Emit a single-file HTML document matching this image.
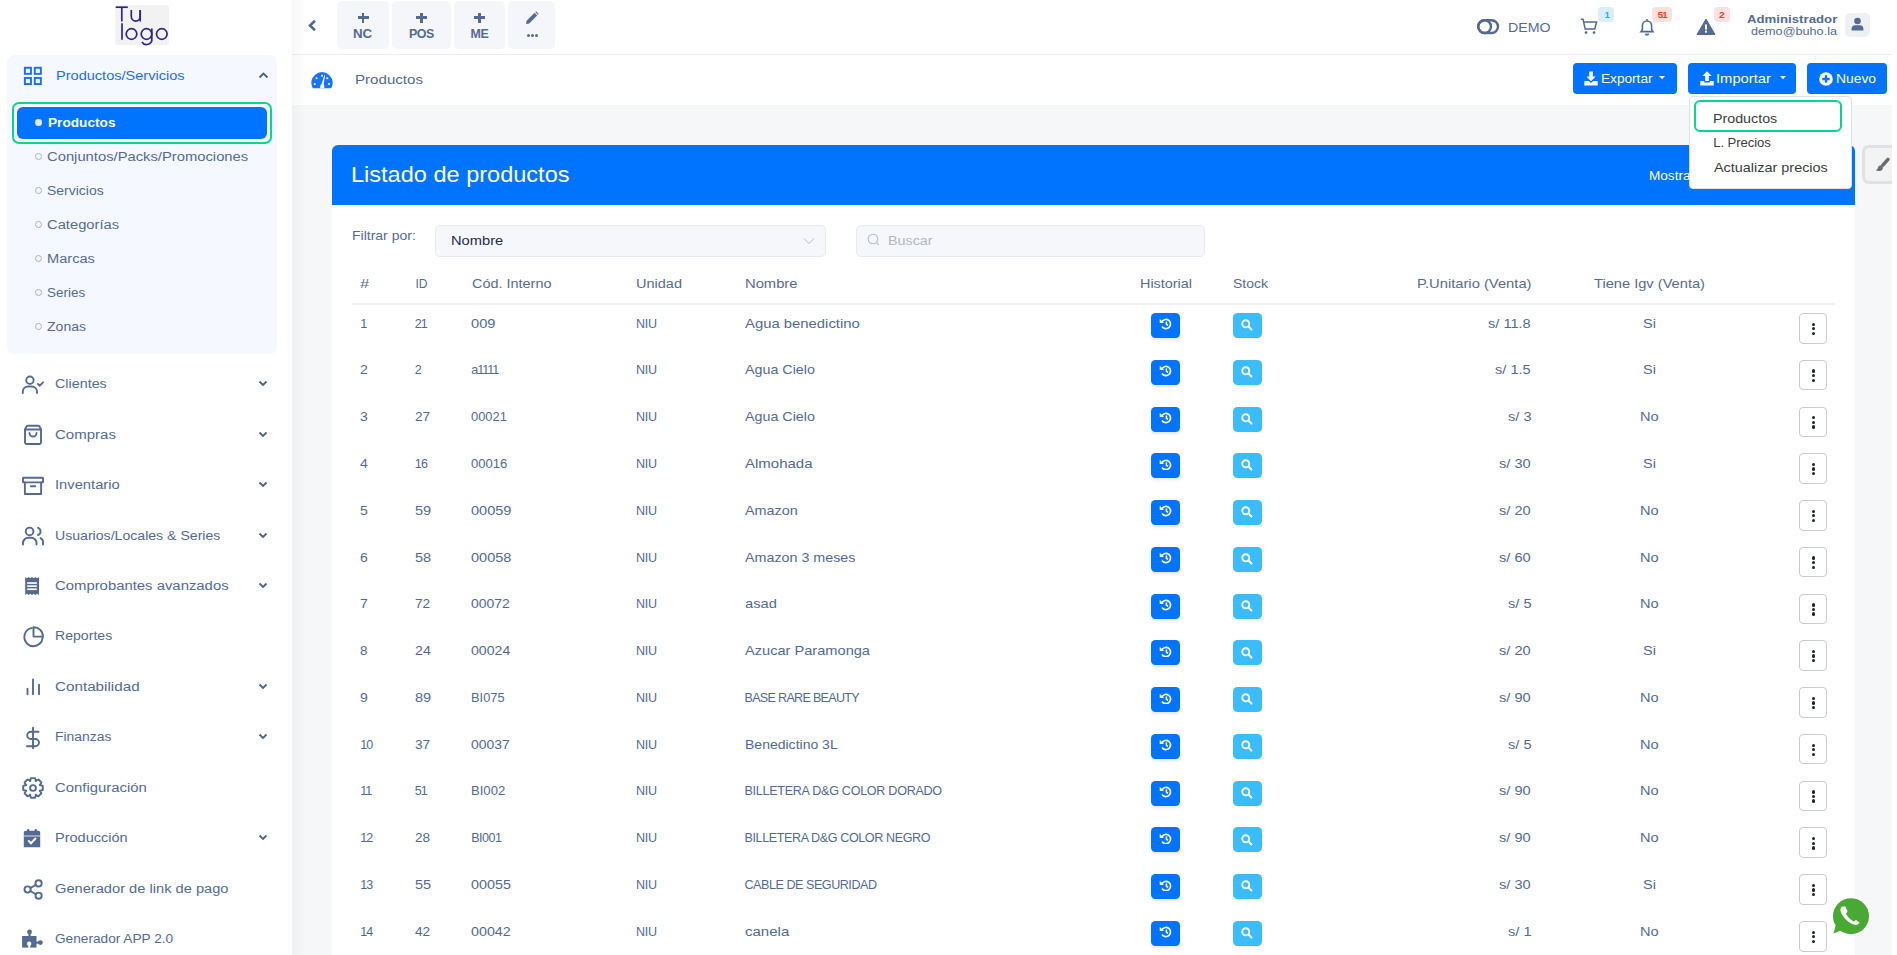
<!DOCTYPE html>
<html><head><meta charset="utf-8">
<style>
*{box-sizing:border-box;margin:0;padding:0}
html,body{width:1897px;height:955px;overflow:hidden;background:#fff;font-family:"Liberation Sans",sans-serif}
.abs{position:absolute}
.t{position:absolute;white-space:nowrap;line-height:1;transform-origin:0 0}
svg{display:block}
.hb{position:absolute;left:1151px;width:29px;height:25px;border-radius:4.5px;background:#0073ff;box-shadow:0 2px 3px rgba(90,60,220,0.14)}
.sb{position:absolute;left:1233px;width:29px;height:25px;border-radius:4.5px;background:#3bbdfd}
.hb svg,.sb svg{position:absolute;left:8px;top:6px}
.ab{position:absolute;left:1799px;width:28px;height:30.5px;border:1px solid #c9cbcf;border-radius:4px;background:#fff}
.ab i{position:absolute;left:11.6px;width:3.3px;height:3.3px;border-radius:50%;background:#1f2530}
</style></head><body>
<div class="abs" style="left:115px;top:5px;width:54px;height:40px;background:#f2f2f3;border-radius:3px"></div>
<svg class="abs" style="left:0;top:0" width="180" height="50" viewBox="0 0 180 50"><g fill="none" stroke="#2e2489" stroke-width="1.7">
<path d="M115.7 7.2 H127.8"/><path d="M121.8 7.2 V21.5"/>
<path d="M131.3 10 V16.6 A4.3 4.3 0 0 0 140.2 16.6 V10"/><path d="M140.2 10 V21.5"/>
<path d="M122 23.3 V39.8"/>
<circle cx="131.5" cy="34" r="5.3"/>
<circle cx="146.5" cy="34" r="5.3"/><path d="M151.8 28.4 V38.6 A5.3 5.3 0 0 1 142 42"/>
<circle cx="161.8" cy="34" r="5.3"/>
</g></svg>
<div class="abs" style="left:7px;top:55px;width:270px;height:299px;background:#f5f9ff;border-radius:7px"></div>
<svg class="abs" style="left:23px;top:66px" width="20" height="20" viewBox="0 0 20 20" fill="none" stroke="#1a6dff" stroke-width="1.9">
<rect x="1.85" y="1.75" width="6.1" height="6.1"/><rect x="11.75" y="1.75" width="6.1" height="6.1"/><rect x="1.85" y="11.95" width="6.1" height="6.1"/><rect x="11.75" y="11.95" width="6.1" height="6.1"/></svg>
<div class="t" style="left:55.90px;top:70.00px;font-size:12.57px;color:#1f6bff;transform:scaleX(1.1584);">Productos/Servicios</div>
<svg class="abs" style="left:257.7px;top:71.3px" width="11" height="8" viewBox="0 0 11 8"><path d="M1.5 6.5 L5.5 2.5 L9.5 6.5" fill="none" stroke="#4f6287" stroke-width="1.9"/></svg>
<div class="abs" style="left:12px;top:102px;width:260px;height:42px;border:2.5px solid #07d68f;border-radius:7px"></div>
<div class="abs" style="left:17px;top:107px;width:250px;height:32px;background:#0073ff;border-radius:6px"></div>
<div class="abs" style="left:35.3px;top:119.3px;width:6.5px;height:6.5px;background:#dce9ff;border-radius:50%"></div>
<div class="t" style="left:47.50px;top:117.00px;font-size:12.57px;color:#ffffff;font-weight:bold;transform:scaleX(1.0865);">Productos</div>
<div class="abs" style="left:34.7px;top:153.0px;width:7.3px;height:7.3px;border:1.3px solid #a9b1c0;border-radius:50%"></div>
<div class="t" style="left:47.30px;top:151.00px;font-size:12.85px;color:#556a93;transform:scaleX(1.1503);">Conjuntos/Packs/Promociones</div>
<div class="abs" style="left:34.7px;top:187.0px;width:7.3px;height:7.3px;border:1.3px solid #a9b1c0;border-radius:50%"></div>
<div class="t" style="left:47.30px;top:185.00px;font-size:12.85px;color:#556a93;transform:scaleX(1.0881);">Servicios</div>
<div class="abs" style="left:34.7px;top:221.0px;width:7.3px;height:7.3px;border:1.3px solid #a9b1c0;border-radius:50%"></div>
<div class="t" style="left:47.30px;top:219.00px;font-size:12.85px;color:#556a93;transform:scaleX(1.1476);">Categorías</div>
<div class="abs" style="left:34.7px;top:255.0px;width:7.3px;height:7.3px;border:1.3px solid #a9b1c0;border-radius:50%"></div>
<div class="t" style="left:47.30px;top:253.00px;font-size:12.85px;color:#556a93;transform:scaleX(1.1375);">Marcas</div>
<div class="abs" style="left:34.7px;top:289.0px;width:7.3px;height:7.3px;border:1.3px solid #a9b1c0;border-radius:50%"></div>
<div class="t" style="left:47.30px;top:287.00px;font-size:12.85px;color:#556a93;transform:scaleX(1.0493);">Series</div>
<div class="abs" style="left:34.7px;top:323.0px;width:7.3px;height:7.3px;border:1.3px solid #a9b1c0;border-radius:50%"></div>
<div class="t" style="left:47.30px;top:321.00px;font-size:12.85px;color:#556a93;transform:scaleX(1.0951);">Zonas</div>
<div class="t" style="left:55.40px;top:378.00px;font-size:12.71px;color:#556a93;transform:scaleX(1.1284);">Clientes</div>
<svg class="abs" style="left:258.1px;top:379.8px" width="10" height="7" viewBox="0 0 10 7"><path d="M1.5 1.5 L5 5 L8.5 1.5" fill="none" stroke="#4f6287" stroke-width="1.85"/></svg>
<div class="t" style="left:55.40px;top:429.00px;font-size:12.71px;color:#556a93;transform:scaleX(1.1814);">Compras</div>
<svg class="abs" style="left:258.1px;top:430.8px" width="10" height="7" viewBox="0 0 10 7"><path d="M1.5 1.5 L5 5 L8.5 1.5" fill="none" stroke="#4f6287" stroke-width="1.85"/></svg>
<div class="t" style="left:55.40px;top:479.00px;font-size:12.71px;color:#556a93;transform:scaleX(1.1596);">Inventario</div>
<svg class="abs" style="left:258.1px;top:480.8px" width="10" height="7" viewBox="0 0 10 7"><path d="M1.5 1.5 L5 5 L8.5 1.5" fill="none" stroke="#4f6287" stroke-width="1.85"/></svg>
<div class="t" style="left:55.40px;top:530.00px;font-size:12.71px;color:#556a93;transform:scaleX(1.1102);">Usuarios/Locales &amp; Series</div>
<svg class="abs" style="left:258.1px;top:531.8px" width="10" height="7" viewBox="0 0 10 7"><path d="M1.5 1.5 L5 5 L8.5 1.5" fill="none" stroke="#4f6287" stroke-width="1.85"/></svg>
<div class="t" style="left:55.40px;top:580.00px;font-size:12.71px;color:#556a93;transform:scaleX(1.1706);">Comprobantes avanzados</div>
<svg class="abs" style="left:258.1px;top:581.8px" width="10" height="7" viewBox="0 0 10 7"><path d="M1.5 1.5 L5 5 L8.5 1.5" fill="none" stroke="#4f6287" stroke-width="1.85"/></svg>
<div class="t" style="left:55.40px;top:630.00px;font-size:12.71px;color:#556a93;transform:scaleX(1.1097);">Reportes</div>
<div class="t" style="left:55.40px;top:681.00px;font-size:12.71px;color:#556a93;transform:scaleX(1.1979);">Contabilidad</div>
<svg class="abs" style="left:258.1px;top:682.8px" width="10" height="7" viewBox="0 0 10 7"><path d="M1.5 1.5 L5 5 L8.5 1.5" fill="none" stroke="#4f6287" stroke-width="1.85"/></svg>
<div class="t" style="left:55.40px;top:731.00px;font-size:12.71px;color:#556a93;transform:scaleX(1.0941);">Finanzas</div>
<svg class="abs" style="left:258.1px;top:732.8px" width="10" height="7" viewBox="0 0 10 7"><path d="M1.5 1.5 L5 5 L8.5 1.5" fill="none" stroke="#4f6287" stroke-width="1.85"/></svg>
<div class="t" style="left:55.40px;top:782.00px;font-size:12.71px;color:#556a93;transform:scaleX(1.1723);">Configuración</div>
<div class="t" style="left:55.40px;top:832.00px;font-size:12.71px;color:#556a93;transform:scaleX(1.1438);">Producción</div>
<svg class="abs" style="left:258.1px;top:833.8px" width="10" height="7" viewBox="0 0 10 7"><path d="M1.5 1.5 L5 5 L8.5 1.5" fill="none" stroke="#4f6287" stroke-width="1.85"/></svg>
<div class="t" style="left:55.40px;top:883.00px;font-size:12.71px;color:#556a93;transform:scaleX(1.1533);">Generador de link de pago</div>
<div class="t" style="left:55.40px;top:933.00px;font-size:12.71px;color:#556a93;transform:scaleX(1.0752);">Generador APP 2.0</div>
<svg class="abs" style="left:0;top:0" width="60" height="955" viewBox="0 0 60 955">
<g fill="none" stroke="#556a93" stroke-width="1.9" stroke-linecap="round" stroke-linejoin="round">
<circle cx="29.9" cy="380.2" r="3.7"/>
<path d="M22.8 393 V391.5 A5.2 5.2 0 0 1 28 386.5 H31.8 A5.2 5.2 0 0 1 37 391.5 V393"/>
<path d="M38 384 L39.8 385.7 L43 382.3"/>
<path d="M25 429.5 V442.2 A1.8 1.8 0 0 0 26.8 444 H39.2 A1.8 1.8 0 0 0 41 442.2 V429.5 L39.6 426.6 A1.8 1.8 0 0 0 38 425.7 H28 A1.8 1.8 0 0 0 26.4 426.6 Z"/>
<path d="M25 429.5 H41"/>
<path d="M29.5 433 A3.5 3.5 0 0 0 36.5 433"/>
<rect x="23" y="477.8" width="20" height="4.6" rx="0.5"/>
<path d="M24.9 482.4 V494 H41.1 V482.4"/>
<path d="M30.8 486.2 H35.2"/>
<circle cx="29.6" cy="531.4" r="3.8"/>
<path d="M23 544.5 V543 A5.3 5.3 0 0 1 28.3 537.7 H31.2 A5.3 5.3 0 0 1 36.5 543 V544.5"/>
<path d="M38 527.8 A3.8 3.8 0 0 1 38 535"/>
<path d="M40.5 538.2 A4.4 4.4 0 0 1 43 542.2 V544.5"/>
<path d="M42.6 637.8 A9.2 9.2 0 1 1 32 627.9"/>
<path d="M42.9 636.6 A9 9 0 0 0 33.5 627.3 V636.6 Z"/>
<path d="M27.5 688.8 V694.2"/><path d="M33 679.5 V694.2"/><path d="M39 684.8 V694.2"/>
<path d="M33 727.8 V748.2"/>
<path d="M38.6 731.8 H30.8 A3.6 3.6 0 0 0 30.8 739 H35.4 A3.6 3.6 0 0 1 35.4 746.2 H27"/>
<circle cx="33" cy="788" r="2.9"/>
<path d="M29.99 781.14 L30.92 778.12 L35.08 778.12 L36.01 781.14 L35.65 780.99 L38.45 779.51 L41.39 782.45 L39.91 785.25 L39.76 784.89 L42.78 785.82 L42.78 789.98 L39.76 790.91 L39.91 790.55 L41.39 793.35 L38.45 796.29 L35.65 794.81 L36.01 794.66 L35.08 797.68 L30.92 797.68 L29.99 794.66 L30.35 794.81 L27.55 796.29 L24.61 793.35 L26.09 790.55 L26.24 790.91 L23.22 789.98 L23.22 785.82 L26.24 784.89 L26.09 785.25 L24.61 782.45 L27.55 779.51 L30.35 780.99 Z"/>
<circle cx="27.6" cy="889.5" r="3.1"/><circle cx="38.6" cy="883.4" r="3.1"/><circle cx="38.6" cy="895.7" r="3.1"/>
<path d="M30.4 888 L35.8 884.9"/><path d="M30.4 891 L35.8 894.2"/>
</g>
<g fill="#556a93">
<path d="M25.2 577 L26.9 578.3 L28.6 577 L30.3 578.3 L32 577 L33.7 578.3 L35.4 577 L37.1 578.3 L39 577 V595 L37.1 593.7 L35.4 595 L33.7 593.7 L32 595 L30.3 593.7 L28.6 595 L26.9 593.7 L25.2 595 Z"/>
<path d="M23.8 832.5 A1.8 1.8 0 0 1 25.6 830.7 H38.4 A1.8 1.8 0 0 1 40.2 832.5 V847.3 H23.8 Z"/>
<rect x="27" y="829" width="2.4" height="4" rx="1"/><rect x="34.6" y="829" width="2.4" height="4" rx="1"/>
<rect x="22.1" y="936" width="14.4" height="11.6"/>
<circle cx="29.5" cy="931.9" r="2.4"/><rect x="28.4" y="932.5" width="2.2" height="4"/>
<circle cx="40.4" cy="942.6" r="2.4"/><rect x="36" y="941.6" width="3" height="2.1"/>
</g>
<g fill="#fff" stroke="none">
<rect x="27.2" y="582.2" width="9.6" height="1.7"/><rect x="27.2" y="585.3" width="9.6" height="1.7"/><rect x="27.2" y="588.4" width="9.6" height="1.7"/>
<rect x="23.8" y="835.6" width="16.4" height="0.8"/>
<circle cx="29.2" cy="943.7" r="2.2"/><rect x="28.3" y="944" width="1.8" height="4"/>
</g>
<path d="M28.2 840.4 L31 843.2 L36 838" fill="none" stroke="#fff" stroke-width="2"/>
</svg>
<div class="abs" style="left:292px;top:54px;width:1600px;height:1px;background:#eceef3"></div>
<svg class="abs" style="left:307px;top:19px" width="11" height="13" viewBox="0 0 11 13"><path d="M8 1.8 L3 6.5 L8 11.2" fill="none" stroke="#556a93" stroke-width="2.6"/></svg>
<div class="abs" style="left:337px;top:1px;width:52px;height:48px;background:#f4f6f9;border-radius:5px"></div>
<div class="abs" style="left:357.5px;top:16.2px;width:11px;height:2.6px;background:#556a93"></div>
<div class="abs" style="left:361.7px;top:12.5px;width:2.6px;height:10.3px;background:#556a93"></div>
<div class="abs" style="left:392px;top:1px;width:59px;height:48px;background:#f4f6f9;border-radius:5px"></div>
<div class="abs" style="left:416.0px;top:16.2px;width:11px;height:2.6px;background:#556a93"></div>
<div class="abs" style="left:420.2px;top:12.5px;width:2.6px;height:10.3px;background:#556a93"></div>
<div class="abs" style="left:454px;top:1px;width:51px;height:48px;background:#f4f6f9;border-radius:5px"></div>
<div class="abs" style="left:474.0px;top:16.2px;width:11px;height:2.6px;background:#556a93"></div>
<div class="abs" style="left:478.2px;top:12.5px;width:2.6px;height:10.3px;background:#556a93"></div>
<div class="abs" style="left:508px;top:1px;width:47px;height:48px;background:#f4f6f9;border-radius:5px"></div>
<div class="t" style="left:353.40px;top:28.00px;font-size:12.43px;color:#556a93;font-weight:bold;transform:scaleX(1.0695);">NC</div>
<div class="t" style="left:409.00px;top:28.00px;font-size:12.43px;color:#556a93;font-weight:bold;letter-spacing:-0.467px;">POS</div>
<div class="t" style="left:470.60px;top:28.00px;font-size:12.43px;color:#556a93;font-weight:bold;letter-spacing:-0.441px;">ME</div>
<svg class="abs" style="left:525px;top:11px" width="14" height="14" viewBox="0 0 14 14"><path d="M1 13 L1.6 9.8 L9.6 1.8 L12.2 4.4 L4.2 12.4 Z" fill="#556a93"/><path d="M10.3 1.1 L11.1 0.3 L13.7 2.9 L12.9 3.7 Z" fill="#556a93"/></svg>
<div class="abs" style="left:526.6px;top:33.7px;width:3.2px;height:3.2px;background:#556a93;border-radius:50%"></div>
<div class="abs" style="left:530.9px;top:33.7px;width:3.2px;height:3.2px;background:#556a93;border-radius:50%"></div>
<div class="abs" style="left:535.2px;top:33.7px;width:3.2px;height:3.2px;background:#556a93;border-radius:50%"></div>
<svg class="abs" style="left:1476px;top:18px" width="24" height="17" viewBox="0 0 24 17"><rect x="2.2" y="2.2" width="19.8" height="12.8" rx="6.4" fill="none" stroke="#556a93" stroke-width="2.4"/><circle cx="8.6" cy="8.6" r="6.4" fill="none" stroke="#556a93" stroke-width="2.4"/></svg>
<div class="t" style="left:1507.70px;top:21.00px;font-size:13.69px;color:#556a93;transform:scaleX(1.0350);">DEMO</div>
<svg class="abs" style="left:1580px;top:18px" width="18" height="17" viewBox="0 0 18 17" fill="none" stroke="#556a93" stroke-width="1.5"><path d="M0.8 1.2 H3 L5.2 11 H14.8 L16.6 4 H4"/><circle cx="6" cy="14.6" r="1.3" fill="#556a93" stroke="none"/><circle cx="14" cy="14.6" r="1.3" fill="#556a93" stroke="none"/></svg>
<div class="abs" style="left:1598px;top:7px;width:16px;height:15px;background:#d9effd;border-radius:4px"></div>
<div class="t" style="left:1604.60px;top:10.00px;font-size:9.64px;color:#3aa3f5;font-weight:bold;">1</div>
<svg class="abs" style="left:1639px;top:18px" width="16" height="18" viewBox="0 0 16 18" fill="none" stroke="#556a93" stroke-width="1.6"><path d="M2 13.6 H14 L12.6 11.6 V7.6 A4.6 4.6 0 0 0 3.4 7.6 V11.6 Z"/><path d="M8 1 V2.8"/><path d="M6.4 15.8 A1.7 1.7 0 0 0 9.6 15.8" fill="#556a93"/></svg>
<div class="abs" style="left:1652px;top:7px;width:20px;height:15px;background:#fde1e1;border-radius:4px"></div>
<div class="t" style="left:1657.80px;top:10.00px;font-size:9.64px;color:#f03a3a;font-weight:bold;letter-spacing:-1.000px;">51</div>
<svg class="abs" style="left:1696px;top:18px" width="20" height="17" viewBox="0 0 20 17"><path d="M10 1 L19 16.5 H1 Z" fill="#556a93" stroke="#556a93" stroke-width="1" stroke-linejoin="round"/><rect x="9" y="6.5" width="2" height="5" fill="#fff"/><rect x="9" y="12.6" width="2" height="2" fill="#fff"/></svg>
<div class="abs" style="left:1714px;top:7px;width:16px;height:15px;background:#fde1e1;border-radius:4px"></div>
<div class="t" style="left:1718.80px;top:10.00px;font-size:9.64px;color:#f03a3a;font-weight:bold;transform:scaleX(1.0822);">2</div>
<div class="t" style="left:1746.70px;top:13.00px;font-size:11.73px;color:#556a93;font-weight:bold;transform:scaleX(1.1274);">Administrador</div>
<div class="t" style="left:1751.00px;top:26.00px;font-size:10.89px;color:#556a93;transform:scaleX(1.1634);">demo@buho.la</div>
<div class="abs" style="left:1845px;top:13px;width:25px;height:24px;background:#eef0f4;border-radius:5px"></div>
<svg class="abs" style="left:1851px;top:17px" width="13" height="14" viewBox="0 0 13 14"><circle cx="6.5" cy="4" r="3.3" fill="#556a93"/><path d="M0.6 13.5 V11.6 C0.6 9.4 2.2 8.2 4 8.2 H9 C10.8 8.2 12.4 9.4 12.4 11.6 V13.5 Z" fill="#556a93"/></svg>
<svg class="abs" style="left:311px;top:71.5px" width="22" height="17" viewBox="0 0 22 17"><path d="M1.9 16.3 A10.65 10.65 0 1 1 20.1 16.3 Z" fill="#1a73ff"/>
<circle cx="5.5" cy="6.2" r="1.05" fill="#fff"/><circle cx="11" cy="3.7" r="1.05" fill="#fff"/><circle cx="16.3" cy="6.2" r="1.05" fill="#fff"/><circle cx="3.7" cy="12" r="1.05" fill="#fff"/><circle cx="18" cy="12" r="1.05" fill="#fff"/>
<path d="M9 16.3 L9.4 13.5 A2 2 0 0 1 10.6 12 L13.3 3.2 L14.1 3.5 L12.6 12.4 A2 2 0 0 1 13.2 14 L13.4 16.3 Z" fill="#fff"/></svg>
<div class="t" style="left:354.80px;top:73.00px;font-size:13.27px;color:#556a93;transform:scaleX(1.1384);">Productos</div>
<div class="abs" style="left:1573px;top:63px;width:104px;height:31px;background:#0073ff;border-radius:4px"></div>
<div class="abs" style="left:1688px;top:63px;width:108px;height:31px;background:#0073ff;border-radius:4px"></div>
<div class="abs" style="left:1807px;top:63px;width:80px;height:31px;background:#0073ff;border-radius:4px"></div>
<div class="t" style="left:1601.00px;top:72.00px;font-size:13.41px;color:#ffffff;transform:scaleX(1.0163);">Exportar</div>
<div class="t" style="left:1716.40px;top:72.00px;font-size:13.41px;color:#ffffff;transform:scaleX(1.1017);">Importar</div>
<div class="t" style="left:1835.50px;top:72.00px;font-size:13.41px;color:#ffffff;transform:scaleX(1.0318);">Nuevo</div>
<svg class="abs" style="left:1659px;top:76px" width="6" height="4" viewBox="0 0 6 4"><path d="M0 0 H6 L3 3.2 Z" fill="#fff"/></svg>
<svg class="abs" style="left:1779.5px;top:76px" width="6" height="4" viewBox="0 0 6 4"><path d="M0 0 H6 L3 3.2 Z" fill="#fff"/></svg>
<svg class="abs" style="left:1584px;top:71px" width="14" height="15" viewBox="0 0 14 15"><path d="M5.2 0.5 H8.8 V5.5 H11.6 L7 10.2 L2.4 5.5 H5.2 Z" fill="#fff"/><path d="M0.3 10 H4.8 L7 12 L9.2 10 H13.7 V14.6 H0.3 Z" fill="#fff"/></svg>
<svg class="abs" style="left:1700px;top:71px" width="14" height="15" viewBox="0 0 14 15"><path d="M5.2 10 H8.8 V5 H11.6 L7 0.3 L2.4 5 H5.2 Z" fill="#fff"/><path d="M0.3 10 H4.2 V11.4 H9.8 V10 H13.7 V14.6 H0.3 Z" fill="#fff"/></svg>
<svg class="abs" style="left:1818.5px;top:71.5px" width="14" height="14" viewBox="0 0 14 14"><circle cx="7" cy="7" r="6.8" fill="#fff"/><rect x="3.3" y="5.8" width="7.4" height="2.4" fill="#0073ff"/><rect x="5.8" y="3.3" width="2.4" height="7.4" fill="#0073ff"/></svg>
<div class="abs" style="left:292px;top:105px;width:1600px;height:850px;background:#f6f7f9"></div>
<div class="abs" style="left:292px;top:0;width:14px;height:955px;background:linear-gradient(to right,rgba(30,40,60,0.035),rgba(30,40,60,0))"></div>
<div class="abs" style="left:332px;top:145px;width:1523px;height:830px;background:#fff;border-radius:6px;overflow:hidden"><div style="position:absolute;left:0;top:0;width:1523px;height:60px;background:#0073ff"></div></div>
<div class="t" style="left:351.30px;top:164.00px;font-size:21.23px;color:#ffffff;transform:scaleX(1.1091);">Listado de productos</div>
<div class="t" style="left:1648.80px;top:170.00px;font-size:12.01px;color:#ffffff;transform:scaleX(1.1310);">Mostrar</div>
<div class="abs" style="left:1862px;top:145px;width:45px;height:39px;background:#f3f3f4;border:3px solid #e0e1e4;border-radius:7px"></div>
<svg class="abs" style="left:1874px;top:156px" width="16" height="16" viewBox="0 0 16 16"><path d="M14 3.4 L9 9" stroke="#686c73" stroke-width="3.4" stroke-linecap="round"/><path d="M7.6 9.2 C5.6 9 4 10.4 3.8 12 C3.7 13 3 13.8 1.6 14 C3.4 15.4 7 15.2 8.4 13.4 C9.2 12.2 9.2 10.6 7.6 9.2 Z" fill="#686c73"/></svg>
<div class="t" style="left:352.20px;top:229.00px;font-size:12.99px;color:#556a93;transform:scaleX(1.0782);">Filtrar por:</div>
<div class="abs" style="left:435px;top:225px;width:391px;height:31.5px;background:#f6f7fa;border:1px solid #e7eaf2;border-radius:5px"></div>
<div class="t" style="left:450.80px;top:235.00px;font-size:12.57px;color:#1c2a50;transform:scaleX(1.1681);">Nombre</div>
<svg class="abs" style="left:803px;top:237px" width="12" height="8" viewBox="0 0 12 8"><path d="M1 1.5 L6 6.5 L11 1.5" fill="none" stroke="#b3bac7" stroke-width="1"/></svg>
<div class="abs" style="left:856px;top:225px;width:349px;height:31.5px;background:#f6f7fa;border:1px solid #e7eaf2;border-radius:5px"></div>
<svg class="abs" style="left:867px;top:233px" width="14" height="14" viewBox="0 0 14 14"><circle cx="6" cy="6" r="4.8" fill="none" stroke="#b6bcc8" stroke-width="1.1"/><path d="M9.6 9.6 L11.8 11.8" stroke="#b6bcc8" stroke-width="1.1"/></svg>
<div class="t" style="left:887.50px;top:234.00px;font-size:12.99px;color:#b2b6bf;transform:scaleX(1.1009);">Buscar</div>
<div class="t" style="left:360.20px;top:278.00px;font-size:12.15px;color:#5a6b8c;transform:scaleX(1.3746);">#</div>
<div class="t" style="left:415.50px;top:278.00px;font-size:12.15px;color:#5a6b8c;letter-spacing:-0.156px;">ID</div>
<div class="t" style="left:471.50px;top:278.00px;font-size:12.15px;color:#5a6b8c;transform:scaleX(1.1896);">Cód. Interno</div>
<div class="t" style="left:636.00px;top:278.00px;font-size:12.15px;color:#5a6b8c;transform:scaleX(1.1953);">Unidad</div>
<div class="t" style="left:744.50px;top:278.00px;font-size:12.15px;color:#5a6b8c;transform:scaleX(1.2156);">Nombre</div>
<div class="t" style="left:1140.00px;top:278.00px;font-size:12.15px;color:#5a6b8c;transform:scaleX(1.1856);">Historial</div>
<div class="t" style="left:1233.00px;top:278.00px;font-size:12.15px;color:#5a6b8c;transform:scaleX(1.1523);">Stock</div>
<div class="t" style="left:1416.50px;top:278.00px;font-size:12.15px;color:#5a6b8c;transform:scaleX(1.2147);">P.Unitario (Venta)</div>
<div class="t" style="left:1594.00px;top:278.00px;font-size:12.15px;color:#5a6b8c;transform:scaleX(1.2063);">Tiene Igv (Venta)</div>
<div class="abs" style="left:352px;top:303px;width:1483px;height:2px;background:#eef0f3"></div>
<div class="t" style="left:360.20px;top:318.00px;font-size:12.57px;color:#556a93;">1</div>
<div class="t" style="left:414.80px;top:318.00px;font-size:12.57px;color:#556a93;letter-spacing:-1.000px;">21</div>
<div class="t" style="left:471.20px;top:318.00px;font-size:12.57px;color:#556a93;transform:scaleX(1.1636);">009</div>
<div class="t" style="left:636.00px;top:318.00px;font-size:12.57px;color:#556a93;letter-spacing:-0.320px;">NIU</div>
<div class="t" style="left:744.50px;top:318.00px;font-size:12.57px;color:#556a93;transform:scaleX(1.1824);">Agua benedictino</div>
<div class="t" style="left:1488.33px;top:318.00px;font-size:12.57px;color:#556a93;transform:scaleX(1.1600);">s/ 11.8</div>
<div class="t" style="left:1642.52px;top:318.00px;font-size:12.57px;color:#556a93;transform:scaleX(1.1600);">Si</div>
<div class="hb" style="top:313.00px"><svg width="12.5" height="11.6" viewBox="0 0 14 13" style="left:8.2px;top:5.4px"><path d="M3.2 4.2 A5.2 5.2 0 1 1 3.4 9.6" fill="none" stroke="#fff" stroke-width="1.9"/><path d="M0.8 0.8 V5.6 H5.6 Z" fill="#fff"/><path d="M8.3 3.8 V6.8 L10 8.4" fill="none" stroke="#fff" stroke-width="1.8"/></svg></div>
<div class="sb" style="top:313.00px"><svg width="12.6" height="12.6" viewBox="0 0 14 14" style="left:8.4px;top:6.2px"><circle cx="5.3" cy="5.3" r="3.9" fill="none" stroke="#fff" stroke-width="2.1"/><path d="M8.2 8.2 L11.6 11.6" stroke="#fff" stroke-width="2.3" stroke-linecap="round"/></svg></div>
<div class="ab" style="top:313.00px"><i style="top:8.6px"></i><i style="top:13.1px"></i><i style="top:17.8px"></i></div>
<div class="t" style="left:360.20px;top:364.00px;font-size:12.57px;color:#556a93;transform:scaleX(1.1143);">2</div>
<div class="t" style="left:414.80px;top:364.00px;font-size:12.57px;color:#556a93;">2</div>
<div class="t" style="left:471.20px;top:364.00px;font-size:12.57px;color:#556a93;letter-spacing:-1.000px;">a1111</div>
<div class="t" style="left:636.00px;top:364.00px;font-size:12.57px;color:#556a93;letter-spacing:-0.320px;">NIU</div>
<div class="t" style="left:744.50px;top:364.00px;font-size:12.57px;color:#556a93;transform:scaleX(1.1372);">Agua Cielo</div>
<div class="t" style="left:1495.35px;top:364.00px;font-size:12.57px;color:#556a93;transform:scaleX(1.1600);">s/ 1.5</div>
<div class="t" style="left:1642.52px;top:364.00px;font-size:12.57px;color:#556a93;transform:scaleX(1.1600);">Si</div>
<div class="hb" style="top:359.77px"><svg width="12.5" height="11.6" viewBox="0 0 14 13" style="left:8.2px;top:5.4px"><path d="M3.2 4.2 A5.2 5.2 0 1 1 3.4 9.6" fill="none" stroke="#fff" stroke-width="1.9"/><path d="M0.8 0.8 V5.6 H5.6 Z" fill="#fff"/><path d="M8.3 3.8 V6.8 L10 8.4" fill="none" stroke="#fff" stroke-width="1.8"/></svg></div>
<div class="sb" style="top:359.77px"><svg width="12.6" height="12.6" viewBox="0 0 14 14" style="left:8.4px;top:6.2px"><circle cx="5.3" cy="5.3" r="3.9" fill="none" stroke="#fff" stroke-width="2.1"/><path d="M8.2 8.2 L11.6 11.6" stroke="#fff" stroke-width="2.3" stroke-linecap="round"/></svg></div>
<div class="ab" style="top:359.77px"><i style="top:8.6px"></i><i style="top:13.1px"></i><i style="top:17.8px"></i></div>
<div class="t" style="left:360.20px;top:411.00px;font-size:12.57px;color:#556a93;transform:scaleX(1.1143);">3</div>
<div class="t" style="left:414.80px;top:411.00px;font-size:12.57px;color:#556a93;transform:scaleX(1.0869);">27</div>
<div class="t" style="left:471.20px;top:411.00px;font-size:12.57px;color:#556a93;transform:scaleX(1.0247);">00021</div>
<div class="t" style="left:636.00px;top:411.00px;font-size:12.57px;color:#556a93;letter-spacing:-0.320px;">NIU</div>
<div class="t" style="left:744.50px;top:411.00px;font-size:12.57px;color:#556a93;transform:scaleX(1.1372);">Agua Cielo</div>
<div class="t" style="left:1507.51px;top:411.00px;font-size:12.57px;color:#556a93;transform:scaleX(1.1600);">s/ 3</div>
<div class="t" style="left:1639.68px;top:411.00px;font-size:12.57px;color:#556a93;transform:scaleX(1.1600);">No</div>
<div class="hb" style="top:406.54px"><svg width="12.5" height="11.6" viewBox="0 0 14 13" style="left:8.2px;top:5.4px"><path d="M3.2 4.2 A5.2 5.2 0 1 1 3.4 9.6" fill="none" stroke="#fff" stroke-width="1.9"/><path d="M0.8 0.8 V5.6 H5.6 Z" fill="#fff"/><path d="M8.3 3.8 V6.8 L10 8.4" fill="none" stroke="#fff" stroke-width="1.8"/></svg></div>
<div class="sb" style="top:406.54px"><svg width="12.6" height="12.6" viewBox="0 0 14 14" style="left:8.4px;top:6.2px"><circle cx="5.3" cy="5.3" r="3.9" fill="none" stroke="#fff" stroke-width="2.1"/><path d="M8.2 8.2 L11.6 11.6" stroke="#fff" stroke-width="2.3" stroke-linecap="round"/></svg></div>
<div class="ab" style="top:406.54px"><i style="top:8.6px"></i><i style="top:13.1px"></i><i style="top:17.8px"></i></div>
<div class="t" style="left:360.20px;top:458.00px;font-size:12.57px;color:#556a93;transform:scaleX(1.1143);">4</div>
<div class="t" style="left:414.80px;top:458.00px;font-size:12.57px;color:#556a93;letter-spacing:-0.784px;">16</div>
<div class="t" style="left:471.20px;top:458.00px;font-size:12.57px;color:#556a93;transform:scaleX(1.0390);">00016</div>
<div class="t" style="left:636.00px;top:458.00px;font-size:12.57px;color:#556a93;letter-spacing:-0.320px;">NIU</div>
<div class="t" style="left:744.50px;top:458.00px;font-size:12.57px;color:#556a93;transform:scaleX(1.1930);">Almohada</div>
<div class="t" style="left:1499.39px;top:458.00px;font-size:12.57px;color:#556a93;transform:scaleX(1.1600);">s/ 30</div>
<div class="t" style="left:1642.52px;top:458.00px;font-size:12.57px;color:#556a93;transform:scaleX(1.1600);">Si</div>
<div class="hb" style="top:453.31px"><svg width="12.5" height="11.6" viewBox="0 0 14 13" style="left:8.2px;top:5.4px"><path d="M3.2 4.2 A5.2 5.2 0 1 1 3.4 9.6" fill="none" stroke="#fff" stroke-width="1.9"/><path d="M0.8 0.8 V5.6 H5.6 Z" fill="#fff"/><path d="M8.3 3.8 V6.8 L10 8.4" fill="none" stroke="#fff" stroke-width="1.8"/></svg></div>
<div class="sb" style="top:453.31px"><svg width="12.6" height="12.6" viewBox="0 0 14 14" style="left:8.4px;top:6.2px"><circle cx="5.3" cy="5.3" r="3.9" fill="none" stroke="#fff" stroke-width="2.1"/><path d="M8.2 8.2 L11.6 11.6" stroke="#fff" stroke-width="2.3" stroke-linecap="round"/></svg></div>
<div class="ab" style="top:453.31px"><i style="top:8.6px"></i><i style="top:13.1px"></i><i style="top:17.8px"></i></div>
<div class="t" style="left:360.20px;top:505.00px;font-size:12.57px;color:#556a93;transform:scaleX(1.1143);">5</div>
<div class="t" style="left:414.80px;top:505.00px;font-size:12.57px;color:#556a93;transform:scaleX(1.1584);">59</div>
<div class="t" style="left:471.20px;top:505.00px;font-size:12.57px;color:#556a93;transform:scaleX(1.1564);">00059</div>
<div class="t" style="left:636.00px;top:505.00px;font-size:12.57px;color:#556a93;letter-spacing:-0.320px;">NIU</div>
<div class="t" style="left:744.50px;top:505.00px;font-size:12.57px;color:#556a93;transform:scaleX(1.1455);">Amazon</div>
<div class="t" style="left:1499.39px;top:505.00px;font-size:12.57px;color:#556a93;transform:scaleX(1.1600);">s/ 20</div>
<div class="t" style="left:1639.68px;top:505.00px;font-size:12.57px;color:#556a93;transform:scaleX(1.1600);">No</div>
<div class="hb" style="top:500.08px"><svg width="12.5" height="11.6" viewBox="0 0 14 13" style="left:8.2px;top:5.4px"><path d="M3.2 4.2 A5.2 5.2 0 1 1 3.4 9.6" fill="none" stroke="#fff" stroke-width="1.9"/><path d="M0.8 0.8 V5.6 H5.6 Z" fill="#fff"/><path d="M8.3 3.8 V6.8 L10 8.4" fill="none" stroke="#fff" stroke-width="1.8"/></svg></div>
<div class="sb" style="top:500.08px"><svg width="12.6" height="12.6" viewBox="0 0 14 14" style="left:8.4px;top:6.2px"><circle cx="5.3" cy="5.3" r="3.9" fill="none" stroke="#fff" stroke-width="2.1"/><path d="M8.2 8.2 L11.6 11.6" stroke="#fff" stroke-width="2.3" stroke-linecap="round"/></svg></div>
<div class="ab" style="top:500.08px"><i style="top:8.6px"></i><i style="top:13.1px"></i><i style="top:17.8px"></i></div>
<div class="t" style="left:360.20px;top:552.00px;font-size:12.57px;color:#556a93;transform:scaleX(1.1143);">6</div>
<div class="t" style="left:414.80px;top:552.00px;font-size:12.57px;color:#556a93;transform:scaleX(1.1584);">58</div>
<div class="t" style="left:471.20px;top:552.00px;font-size:12.57px;color:#556a93;transform:scaleX(1.1564);">00058</div>
<div class="t" style="left:636.00px;top:552.00px;font-size:12.57px;color:#556a93;letter-spacing:-0.320px;">NIU</div>
<div class="t" style="left:744.50px;top:552.00px;font-size:12.57px;color:#556a93;transform:scaleX(1.1374);">Amazon 3 meses</div>
<div class="t" style="left:1499.39px;top:552.00px;font-size:12.57px;color:#556a93;transform:scaleX(1.1600);">s/ 60</div>
<div class="t" style="left:1639.68px;top:552.00px;font-size:12.57px;color:#556a93;transform:scaleX(1.1600);">No</div>
<div class="hb" style="top:546.85px"><svg width="12.5" height="11.6" viewBox="0 0 14 13" style="left:8.2px;top:5.4px"><path d="M3.2 4.2 A5.2 5.2 0 1 1 3.4 9.6" fill="none" stroke="#fff" stroke-width="1.9"/><path d="M0.8 0.8 V5.6 H5.6 Z" fill="#fff"/><path d="M8.3 3.8 V6.8 L10 8.4" fill="none" stroke="#fff" stroke-width="1.8"/></svg></div>
<div class="sb" style="top:546.85px"><svg width="12.6" height="12.6" viewBox="0 0 14 14" style="left:8.4px;top:6.2px"><circle cx="5.3" cy="5.3" r="3.9" fill="none" stroke="#fff" stroke-width="2.1"/><path d="M8.2 8.2 L11.6 11.6" stroke="#fff" stroke-width="2.3" stroke-linecap="round"/></svg></div>
<div class="ab" style="top:546.85px"><i style="top:8.6px"></i><i style="top:13.1px"></i><i style="top:17.8px"></i></div>
<div class="t" style="left:360.20px;top:598.00px;font-size:12.57px;color:#556a93;transform:scaleX(1.1143);">7</div>
<div class="t" style="left:414.80px;top:598.00px;font-size:12.57px;color:#556a93;transform:scaleX(1.0869);">72</div>
<div class="t" style="left:471.20px;top:598.00px;font-size:12.57px;color:#556a93;transform:scaleX(1.1077);">00072</div>
<div class="t" style="left:636.00px;top:598.00px;font-size:12.57px;color:#556a93;letter-spacing:-0.320px;">NIU</div>
<div class="t" style="left:744.50px;top:598.00px;font-size:12.57px;color:#556a93;transform:scaleX(1.1743);">asad</div>
<div class="t" style="left:1507.51px;top:598.00px;font-size:12.57px;color:#556a93;transform:scaleX(1.1600);">s/ 5</div>
<div class="t" style="left:1639.68px;top:598.00px;font-size:12.57px;color:#556a93;transform:scaleX(1.1600);">No</div>
<div class="hb" style="top:593.62px"><svg width="12.5" height="11.6" viewBox="0 0 14 13" style="left:8.2px;top:5.4px"><path d="M3.2 4.2 A5.2 5.2 0 1 1 3.4 9.6" fill="none" stroke="#fff" stroke-width="1.9"/><path d="M0.8 0.8 V5.6 H5.6 Z" fill="#fff"/><path d="M8.3 3.8 V6.8 L10 8.4" fill="none" stroke="#fff" stroke-width="1.8"/></svg></div>
<div class="sb" style="top:593.62px"><svg width="12.6" height="12.6" viewBox="0 0 14 14" style="left:8.4px;top:6.2px"><circle cx="5.3" cy="5.3" r="3.9" fill="none" stroke="#fff" stroke-width="2.1"/><path d="M8.2 8.2 L11.6 11.6" stroke="#fff" stroke-width="2.3" stroke-linecap="round"/></svg></div>
<div class="ab" style="top:593.62px"><i style="top:8.6px"></i><i style="top:13.1px"></i><i style="top:17.8px"></i></div>
<div class="t" style="left:360.20px;top:645.00px;font-size:12.57px;color:#556a93;transform:scaleX(1.0714);">8</div>
<div class="t" style="left:414.80px;top:645.00px;font-size:12.57px;color:#556a93;transform:scaleX(1.1298);">24</div>
<div class="t" style="left:471.20px;top:645.00px;font-size:12.57px;color:#556a93;transform:scaleX(1.1249);">00024</div>
<div class="t" style="left:636.00px;top:645.00px;font-size:12.57px;color:#556a93;letter-spacing:-0.320px;">NIU</div>
<div class="t" style="left:744.50px;top:645.00px;font-size:12.57px;color:#556a93;transform:scaleX(1.1623);">Azucar Paramonga</div>
<div class="t" style="left:1499.39px;top:645.00px;font-size:12.57px;color:#556a93;transform:scaleX(1.1600);">s/ 20</div>
<div class="t" style="left:1642.52px;top:645.00px;font-size:12.57px;color:#556a93;transform:scaleX(1.1600);">Si</div>
<div class="hb" style="top:640.39px"><svg width="12.5" height="11.6" viewBox="0 0 14 13" style="left:8.2px;top:5.4px"><path d="M3.2 4.2 A5.2 5.2 0 1 1 3.4 9.6" fill="none" stroke="#fff" stroke-width="1.9"/><path d="M0.8 0.8 V5.6 H5.6 Z" fill="#fff"/><path d="M8.3 3.8 V6.8 L10 8.4" fill="none" stroke="#fff" stroke-width="1.8"/></svg></div>
<div class="sb" style="top:640.39px"><svg width="12.6" height="12.6" viewBox="0 0 14 14" style="left:8.4px;top:6.2px"><circle cx="5.3" cy="5.3" r="3.9" fill="none" stroke="#fff" stroke-width="2.1"/><path d="M8.2 8.2 L11.6 11.6" stroke="#fff" stroke-width="2.3" stroke-linecap="round"/></svg></div>
<div class="ab" style="top:640.39px"><i style="top:8.6px"></i><i style="top:13.1px"></i><i style="top:17.8px"></i></div>
<div class="t" style="left:360.20px;top:692.00px;font-size:12.57px;color:#556a93;transform:scaleX(1.1143);">9</div>
<div class="t" style="left:414.80px;top:692.00px;font-size:12.57px;color:#556a93;transform:scaleX(1.1584);">89</div>
<div class="t" style="left:471.20px;top:692.00px;font-size:12.57px;color:#556a93;transform:scaleX(1.0230);">BI075</div>
<div class="t" style="left:636.00px;top:692.00px;font-size:12.57px;color:#556a93;letter-spacing:-0.320px;">NIU</div>
<div class="t" style="left:744.50px;top:692.00px;font-size:12.57px;color:#556a93;letter-spacing:-0.698px;">BASE RARE BEAUTY</div>
<div class="t" style="left:1499.39px;top:692.00px;font-size:12.57px;color:#556a93;transform:scaleX(1.1600);">s/ 90</div>
<div class="t" style="left:1639.68px;top:692.00px;font-size:12.57px;color:#556a93;transform:scaleX(1.1600);">No</div>
<div class="hb" style="top:687.16px"><svg width="12.5" height="11.6" viewBox="0 0 14 13" style="left:8.2px;top:5.4px"><path d="M3.2 4.2 A5.2 5.2 0 1 1 3.4 9.6" fill="none" stroke="#fff" stroke-width="1.9"/><path d="M0.8 0.8 V5.6 H5.6 Z" fill="#fff"/><path d="M8.3 3.8 V6.8 L10 8.4" fill="none" stroke="#fff" stroke-width="1.8"/></svg></div>
<div class="sb" style="top:687.16px"><svg width="12.6" height="12.6" viewBox="0 0 14 14" style="left:8.4px;top:6.2px"><circle cx="5.3" cy="5.3" r="3.9" fill="none" stroke="#fff" stroke-width="2.1"/><path d="M8.2 8.2 L11.6 11.6" stroke="#fff" stroke-width="2.3" stroke-linecap="round"/></svg></div>
<div class="ab" style="top:687.16px"><i style="top:8.6px"></i><i style="top:13.1px"></i><i style="top:17.8px"></i></div>
<div class="t" style="left:360.20px;top:739.00px;font-size:12.57px;color:#556a93;letter-spacing:-1.000px;">10</div>
<div class="t" style="left:414.80px;top:739.00px;font-size:12.57px;color:#556a93;transform:scaleX(1.0869);">37</div>
<div class="t" style="left:471.20px;top:739.00px;font-size:12.57px;color:#556a93;transform:scaleX(1.1077);">00037</div>
<div class="t" style="left:636.00px;top:739.00px;font-size:12.57px;color:#556a93;letter-spacing:-0.320px;">NIU</div>
<div class="t" style="left:744.50px;top:739.00px;font-size:12.57px;color:#556a93;transform:scaleX(1.1152);">Benedictino 3L</div>
<div class="t" style="left:1507.51px;top:739.00px;font-size:12.57px;color:#556a93;transform:scaleX(1.1600);">s/ 5</div>
<div class="t" style="left:1639.68px;top:739.00px;font-size:12.57px;color:#556a93;transform:scaleX(1.1600);">No</div>
<div class="hb" style="top:733.93px"><svg width="12.5" height="11.6" viewBox="0 0 14 13" style="left:8.2px;top:5.4px"><path d="M3.2 4.2 A5.2 5.2 0 1 1 3.4 9.6" fill="none" stroke="#fff" stroke-width="1.9"/><path d="M0.8 0.8 V5.6 H5.6 Z" fill="#fff"/><path d="M8.3 3.8 V6.8 L10 8.4" fill="none" stroke="#fff" stroke-width="1.8"/></svg></div>
<div class="sb" style="top:733.93px"><svg width="12.6" height="12.6" viewBox="0 0 14 14" style="left:8.4px;top:6.2px"><circle cx="5.3" cy="5.3" r="3.9" fill="none" stroke="#fff" stroke-width="2.1"/><path d="M8.2 8.2 L11.6 11.6" stroke="#fff" stroke-width="2.3" stroke-linecap="round"/></svg></div>
<div class="ab" style="top:733.93px"><i style="top:8.6px"></i><i style="top:13.1px"></i><i style="top:17.8px"></i></div>
<div class="t" style="left:360.20px;top:785.00px;font-size:12.57px;color:#556a93;letter-spacing:-1.000px;">11</div>
<div class="t" style="left:414.80px;top:785.00px;font-size:12.57px;color:#556a93;letter-spacing:-1.000px;">51</div>
<div class="t" style="left:471.20px;top:785.00px;font-size:12.57px;color:#556a93;transform:scaleX(1.0413);">BI002</div>
<div class="t" style="left:636.00px;top:785.00px;font-size:12.57px;color:#556a93;letter-spacing:-0.320px;">NIU</div>
<div class="t" style="left:744.50px;top:785.00px;font-size:12.57px;color:#556a93;letter-spacing:-0.278px;">BILLETERA D&amp;G COLOR DORADO</div>
<div class="t" style="left:1499.39px;top:785.00px;font-size:12.57px;color:#556a93;transform:scaleX(1.1600);">s/ 90</div>
<div class="t" style="left:1639.68px;top:785.00px;font-size:12.57px;color:#556a93;transform:scaleX(1.1600);">No</div>
<div class="hb" style="top:780.70px"><svg width="12.5" height="11.6" viewBox="0 0 14 13" style="left:8.2px;top:5.4px"><path d="M3.2 4.2 A5.2 5.2 0 1 1 3.4 9.6" fill="none" stroke="#fff" stroke-width="1.9"/><path d="M0.8 0.8 V5.6 H5.6 Z" fill="#fff"/><path d="M8.3 3.8 V6.8 L10 8.4" fill="none" stroke="#fff" stroke-width="1.8"/></svg></div>
<div class="sb" style="top:780.70px"><svg width="12.6" height="12.6" viewBox="0 0 14 14" style="left:8.4px;top:6.2px"><circle cx="5.3" cy="5.3" r="3.9" fill="none" stroke="#fff" stroke-width="2.1"/><path d="M8.2 8.2 L11.6 11.6" stroke="#fff" stroke-width="2.3" stroke-linecap="round"/></svg></div>
<div class="ab" style="top:780.70px"><i style="top:8.6px"></i><i style="top:13.1px"></i><i style="top:17.8px"></i></div>
<div class="t" style="left:360.20px;top:832.00px;font-size:12.57px;color:#556a93;letter-spacing:-1.000px;">12</div>
<div class="t" style="left:414.80px;top:832.00px;font-size:12.57px;color:#556a93;transform:scaleX(1.0869);">28</div>
<div class="t" style="left:471.20px;top:832.00px;font-size:12.57px;color:#556a93;letter-spacing:-0.511px;">BI001</div>
<div class="t" style="left:636.00px;top:832.00px;font-size:12.57px;color:#556a93;letter-spacing:-0.320px;">NIU</div>
<div class="t" style="left:744.50px;top:832.00px;font-size:12.57px;color:#556a93;letter-spacing:-0.395px;">BILLETERA D&amp;G COLOR NEGRO</div>
<div class="t" style="left:1499.39px;top:832.00px;font-size:12.57px;color:#556a93;transform:scaleX(1.1600);">s/ 90</div>
<div class="t" style="left:1639.68px;top:832.00px;font-size:12.57px;color:#556a93;transform:scaleX(1.1600);">No</div>
<div class="hb" style="top:827.47px"><svg width="12.5" height="11.6" viewBox="0 0 14 13" style="left:8.2px;top:5.4px"><path d="M3.2 4.2 A5.2 5.2 0 1 1 3.4 9.6" fill="none" stroke="#fff" stroke-width="1.9"/><path d="M0.8 0.8 V5.6 H5.6 Z" fill="#fff"/><path d="M8.3 3.8 V6.8 L10 8.4" fill="none" stroke="#fff" stroke-width="1.8"/></svg></div>
<div class="sb" style="top:827.47px"><svg width="12.6" height="12.6" viewBox="0 0 14 14" style="left:8.4px;top:6.2px"><circle cx="5.3" cy="5.3" r="3.9" fill="none" stroke="#fff" stroke-width="2.1"/><path d="M8.2 8.2 L11.6 11.6" stroke="#fff" stroke-width="2.3" stroke-linecap="round"/></svg></div>
<div class="ab" style="top:827.47px"><i style="top:8.6px"></i><i style="top:13.1px"></i><i style="top:17.8px"></i></div>
<div class="t" style="left:360.20px;top:879.00px;font-size:12.57px;color:#556a93;letter-spacing:-1.000px;">13</div>
<div class="t" style="left:414.80px;top:879.00px;font-size:12.57px;color:#556a93;transform:scaleX(1.1584);">55</div>
<div class="t" style="left:471.20px;top:879.00px;font-size:12.57px;color:#556a93;transform:scaleX(1.1449);">00055</div>
<div class="t" style="left:636.00px;top:879.00px;font-size:12.57px;color:#556a93;letter-spacing:-0.320px;">NIU</div>
<div class="t" style="left:744.50px;top:879.00px;font-size:12.57px;color:#556a93;letter-spacing:-0.460px;">CABLE DE SEGURIDAD</div>
<div class="t" style="left:1499.39px;top:879.00px;font-size:12.57px;color:#556a93;transform:scaleX(1.1600);">s/ 30</div>
<div class="t" style="left:1642.52px;top:879.00px;font-size:12.57px;color:#556a93;transform:scaleX(1.1600);">Si</div>
<div class="hb" style="top:874.24px"><svg width="12.5" height="11.6" viewBox="0 0 14 13" style="left:8.2px;top:5.4px"><path d="M3.2 4.2 A5.2 5.2 0 1 1 3.4 9.6" fill="none" stroke="#fff" stroke-width="1.9"/><path d="M0.8 0.8 V5.6 H5.6 Z" fill="#fff"/><path d="M8.3 3.8 V6.8 L10 8.4" fill="none" stroke="#fff" stroke-width="1.8"/></svg></div>
<div class="sb" style="top:874.24px"><svg width="12.6" height="12.6" viewBox="0 0 14 14" style="left:8.4px;top:6.2px"><circle cx="5.3" cy="5.3" r="3.9" fill="none" stroke="#fff" stroke-width="2.1"/><path d="M8.2 8.2 L11.6 11.6" stroke="#fff" stroke-width="2.3" stroke-linecap="round"/></svg></div>
<div class="ab" style="top:874.24px"><i style="top:8.6px"></i><i style="top:13.1px"></i><i style="top:17.8px"></i></div>
<div class="t" style="left:360.20px;top:926.00px;font-size:12.57px;color:#556a93;letter-spacing:-1.000px;">14</div>
<div class="t" style="left:414.80px;top:926.00px;font-size:12.57px;color:#556a93;transform:scaleX(1.0869);">42</div>
<div class="t" style="left:471.20px;top:926.00px;font-size:12.57px;color:#556a93;transform:scaleX(1.1363);">00042</div>
<div class="t" style="left:636.00px;top:926.00px;font-size:12.57px;color:#556a93;letter-spacing:-0.320px;">NIU</div>
<div class="t" style="left:744.50px;top:926.00px;font-size:12.57px;color:#556a93;transform:scaleX(1.1963);">canela</div>
<div class="t" style="left:1507.51px;top:926.00px;font-size:12.57px;color:#556a93;transform:scaleX(1.1600);">s/ 1</div>
<div class="t" style="left:1639.68px;top:926.00px;font-size:12.57px;color:#556a93;transform:scaleX(1.1600);">No</div>
<div class="hb" style="top:921.01px"><svg width="12.5" height="11.6" viewBox="0 0 14 13" style="left:8.2px;top:5.4px"><path d="M3.2 4.2 A5.2 5.2 0 1 1 3.4 9.6" fill="none" stroke="#fff" stroke-width="1.9"/><path d="M0.8 0.8 V5.6 H5.6 Z" fill="#fff"/><path d="M8.3 3.8 V6.8 L10 8.4" fill="none" stroke="#fff" stroke-width="1.8"/></svg></div>
<div class="sb" style="top:921.01px"><svg width="12.6" height="12.6" viewBox="0 0 14 14" style="left:8.4px;top:6.2px"><circle cx="5.3" cy="5.3" r="3.9" fill="none" stroke="#fff" stroke-width="2.1"/><path d="M8.2 8.2 L11.6 11.6" stroke="#fff" stroke-width="2.3" stroke-linecap="round"/></svg></div>
<div class="ab" style="top:921.01px"><i style="top:8.6px"></i><i style="top:13.1px"></i><i style="top:17.8px"></i></div>
<div class="abs" style="left:1689px;top:96px;width:163px;height:93px;background:#fff;border:1px solid #dfe1e5;border-radius:4px"></div>
<div class="abs" style="left:1694px;top:100px;width:148px;height:32px;border:2.5px solid #07d68f;border-radius:6px"></div>
<div class="t" style="left:1713.20px;top:112.00px;font-size:13.13px;color:#3a3c40;transform:scaleX(1.0861);">Productos</div>
<div class="t" style="left:1713.20px;top:136.00px;font-size:13.13px;color:#3a3c40;letter-spacing:-0.084px;">L. Precios</div>
<div class="t" style="left:1713.50px;top:161.00px;font-size:13.13px;color:#3a3c40;transform:scaleX(1.0985);">Actualizar precios</div>
<svg class="abs" style="left:1830px;top:895px" width="44" height="44" viewBox="0 0 44 44"><circle cx="21" cy="21" r="20" fill="#fff"/><circle cx="21" cy="21.2" r="18" fill="#4aa934"/><path d="M3.5 38.5 L6 29 L13 34.5 Z" fill="#4aa934"/>
<path d="M11.6 11.8 C10.4 13 10.1 14.8 10.8 16.8 C12.6 21.8 17.6 27.4 23.4 29.6 C25.8 30.4 27.6 30 28.9 28.6 L29.6 27.4 L26 25 L24.2 26.6 C21.2 25.4 17.2 21.4 16 18.4 L17.6 16.6 L15.2 11.2 Z" fill="#fff"/></svg>
<div class="abs" style="left:1892px;top:0;width:5px;height:955px;background:#fff"></div>
</body></html>
